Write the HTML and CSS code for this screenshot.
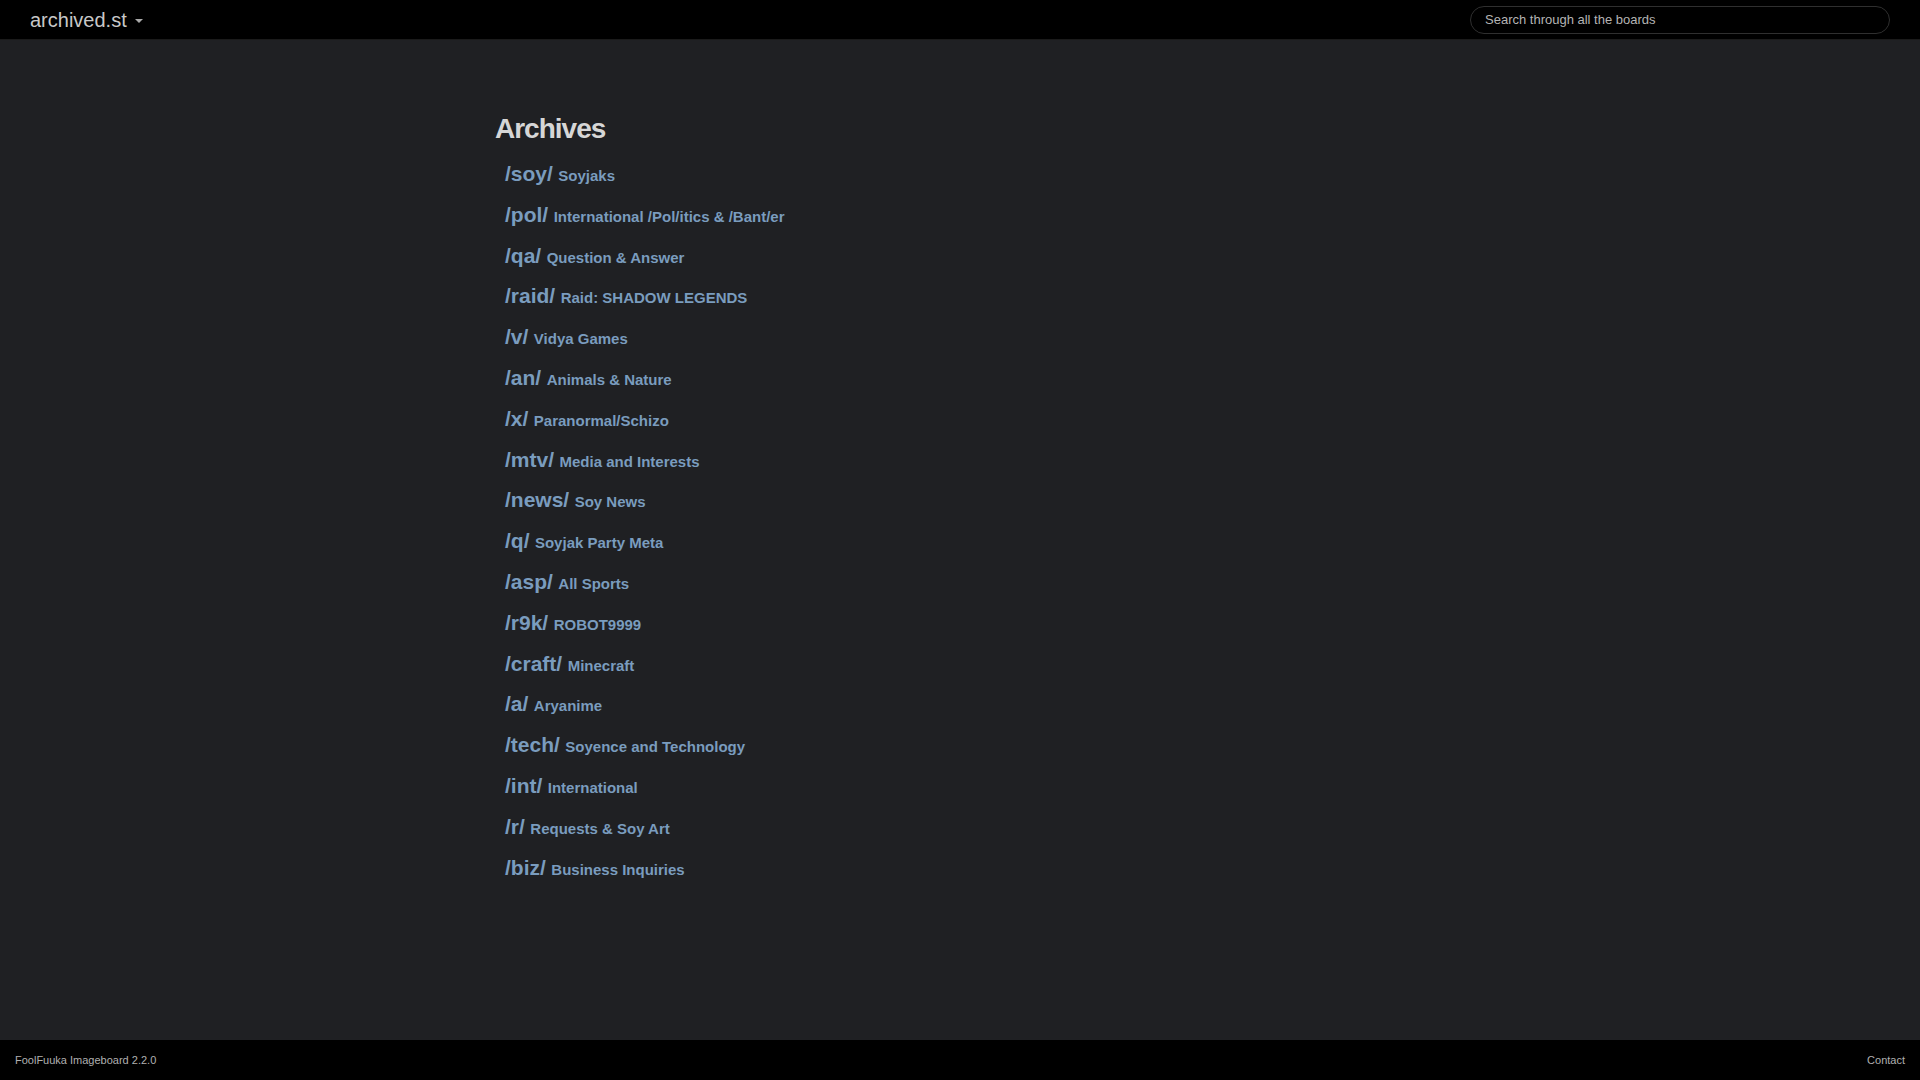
FILE: index.html
```html
<!DOCTYPE html>
<html lang="en">
<head>
    <meta charset="UTF-8">
    <meta name="viewport" content="width=device-width, initial-scale=1.0">
    <title>archived.st</title>
    <link rel="stylesheet" href="styles.css">
</head>
<body>
    <div class="navbar">
        <a class="brand" href="#">archived.st <span class="caret"></span></a>
        <input class="search" type="text" placeholder="Search through all the boards">
    </div>

    <div class="main-container">
        <div class="archives">
            <h2>Archives</h2>
            <ul class="boards">
                <li><a href="#"><span class="board">/soy/</span> <span class="title">Soyjaks</span></a></li>
                <li><a href="#"><span class="board">/pol/</span> <span class="title">International /Pol/itics &amp; /Bant/er</span></a></li>
                <li><a href="#"><span class="board">/qa/</span> <span class="title">Question &amp; Answer</span></a></li>
                <li><a href="#"><span class="board">/raid/</span> <span class="title">Raid: SHADOW LEGENDS</span></a></li>
                <li><a href="#"><span class="board">/v/</span> <span class="title">Vidya Games</span></a></li>
                <li><a href="#"><span class="board">/an/</span> <span class="title">Animals &amp; Nature</span></a></li>
                <li><a href="#"><span class="board">/x/</span> <span class="title">Paranormal/Schizo</span></a></li>
                <li><a href="#"><span class="board">/mtv/</span> <span class="title">Media and Interests</span></a></li>
                <li><a href="#"><span class="board">/news/</span> <span class="title">Soy News</span></a></li>
                <li><a href="#"><span class="board">/q/</span> <span class="title">Soyjak Party Meta</span></a></li>
                <li><a href="#"><span class="board">/asp/</span> <span class="title">All Sports</span></a></li>
                <li><a href="#"><span class="board">/r9k/</span> <span class="title">ROBOT9999</span></a></li>
                <li><a href="#"><span class="board">/craft/</span> <span class="title">Minecraft</span></a></li>
                <li><a href="#"><span class="board">/a/</span> <span class="title">Aryanime</span></a></li>
                <li><a href="#"><span class="board">/tech/</span> <span class="title">Soyence and Technology</span></a></li>
                <li><a href="#"><span class="board">/int/</span> <span class="title">International</span></a></li>
                <li><a href="#"><span class="board">/r/</span> <span class="title">Requests &amp; Soy Art</span></a></li>
                <li><a href="#"><span class="board">/biz/</span> <span class="title">Business Inquiries</span></a></li>
            </ul>
        </div>
    </div>

    <div class="footer">
        <span>FoolFuuka Imageboard 2.2.0</span>
        <a href="#">Contact</a>
    </div>
</body>
</html>
```

FILE: styles.css
```css
html, body {
    height: 100%;
}
body {
    font-family: "Liberation Sans", Arial, sans-serif;
    margin: 0;
    background: #1f2023;
    color: #ccc;
    display: flex;
    flex-direction: column;
}
a {
    text-decoration: none;
}

/* Top bar */
.navbar {
    height: 40px;
    box-sizing: border-box;
    background: #000;
    border-bottom: 1px solid #1b1b1b;
    display: flex;
    align-items: center;
    justify-content: space-between;
    padding: 0 30px;
}
.brand {
    color: #c8c8c8;
    font-size: 20px;
    line-height: 40px;
    display: flex;
    align-items: center;
}
.caret {
    display: inline-block;
    width: 0;
    height: 0;
    margin-left: 8px;
    margin-top: 2px;
    border-top: 4px solid #aaa;
    border-left: 4px solid transparent;
    border-right: 4px solid transparent;
}
.search {
    width: 420px;
    height: 28px;
    box-sizing: border-box;
    background: #000;
    border: 1px solid #2f2f2f;
    border-radius: 14px;
    padding: 0 14px;
    color: #bbb;
    font-family: inherit;
    font-size: 13px;
    outline: none;
}
.search::placeholder {
    color: #b4b4b4;
}

/* Board list */
.main-container {
    flex: 1;
}
.archives {
    width: 930px;
    margin: 0 auto;
    padding-top: 72px;
}
.archives h2 {
    margin: 0 0 9px;
    font-size: 28px;
    line-height: 33px;
    letter-spacing: -1px;
    font-weight: bold;
    color: #d6d6d6;
}
.boards {
    list-style: none;
    margin: 0;
    padding: 0 0 0 10px;
}
.boards li {
    line-height: 40.8px;
    height: 40.8px;
}
.boards a {
    color: #7a9cbe;
}
.board {
    font-size: 21px;
    font-weight: bold;
}
.title {
    font-size: 15px;
    font-weight: bold;
    margin-left: 1px;
}

/* Footer */
.footer {
    height: 40px;
    background: #000;
    display: flex;
    align-items: center;
    justify-content: space-between;
    padding: 0 15px;
    font-size: 11px;
    color: #b0b0b0;
}
.footer a {
    color: #b0b0b0;
}
```
